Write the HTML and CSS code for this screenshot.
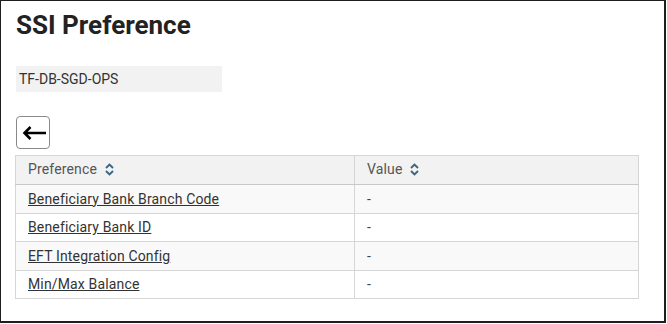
FILE: index.html
```html
<!DOCTYPE html>
<html>
	<head>
		<meta charset="utf-8">
		<title>SSI Preference</title>
		<link rel="stylesheet" href="styles.css">
	</head>
	<body>
		<div class="ssi-wrapper">
			<h1 class="ssi-title">SSI Preference</h1>

			<div class="ssi-account">TF-DB-SGD-OPS</div>

			<button class="back-btn" type="button" aria-label="Back">
				<svg width="24" height="14" viewBox="0 0 24 14">
					<path d="M24 7H2.5M8.5 1L2.5 7l6 6" fill="none" stroke="#000" stroke-width="2.6"/>
				</svg>
			</button>

			<table class="pref-table">
				<thead>
					<tr>
						<th class="col-pref">Preference <span class="sort-icon"><svg width="9" height="13" viewBox="0 0 9 13"><path d="M1 5L4.5 1.5 8 5M1 8L4.5 11.5 8 8" fill="none" stroke="#3d6580" stroke-width="1.9"/></svg></span></th>
						<th>Value <span class="sort-icon"><svg width="9" height="13" viewBox="0 0 9 13"><path d="M1 5L4.5 1.5 8 5M1 8L4.5 11.5 8 8" fill="none" stroke="#3d6580" stroke-width="1.9"/></svg></span></th>
					</tr>
				</thead>
				<tbody>
					<tr><td><a href="#">Beneficiary Bank Branch Code</a></td><td>-</td></tr>
					<tr><td><a href="#">Beneficiary Bank ID</a></td><td>-</td></tr>
					<tr><td><a href="#">EFT Integration Config</a></td><td>-</td></tr>
					<tr><td><a href="#">Min/Max Balance</a></td><td>-</td></tr>
				</tbody>
			</table>
		</div>
	</body>
</html>
```

FILE: styles.css
```css
html, body{
	margin: 0;
	padding: 0;
	background: #fff;
}
.ssi-wrapper{
	box-sizing: border-box;
	width: 666px;
	height: 323px;
	border: 1px solid #1e1e1e;
	border-right-width: 2px;
	border-bottom-width: 2px;
	padding: 8px 0 0 14px;
	font-family: Roboto, "Liberation Sans", Arial, sans-serif;
	color: #333;
}
.ssi-title{
	margin: 0;
	font-size: 26px;
	line-height: 32px;
	font-weight: 700;
	color: #222;
	padding-left: 1px;
}
.ssi-account{
	width: 203px;
	height: 26px;
	margin: 25px 0 0 1px;
	padding-left: 3px;
	background: #f2f2f2;
	font-size: 14px;
	line-height: 26px;
	color: #333;
}
.back-btn{
	display: flex;
	align-items: center;
	justify-content: center;
	width: 34px;
	height: 33px;
	margin: 24px 0 0 1px;
	padding: 0 0 0 2px;
	border: 1px solid #8a8a8a;
	border-radius: 4px;
	background: #fff;
}
.pref-table{
	width: 624px;
	margin-top: 6px;
	border-collapse: collapse;
	font-size: 14px;
	letter-spacing: 0.15px;
	border: 1px solid #cfcfcf;
}
.pref-table th, .pref-table td{
	padding: 0 12px;
	text-align: left;
	border: 1px solid #d6d6d6;
}
.pref-table th{
	height: 28px;
	font-weight: 400;
	color: #555;
	background: #f2f2f2;
	border-bottom-color: #c8c8c8;
}
.pref-table td{
	height: 27.5px;
	color: #444;
}
.pref-table .col-pref{
	width: 314px;
}
.sort-icon{
	display: inline-block;
	margin-left: 4px;
	vertical-align: -2px;
}
.pref-table tbody tr:nth-child(odd){
	background: #f9f9f9;
}
.pref-table td a{
	color: #333;
	text-decoration: underline;
}
```
